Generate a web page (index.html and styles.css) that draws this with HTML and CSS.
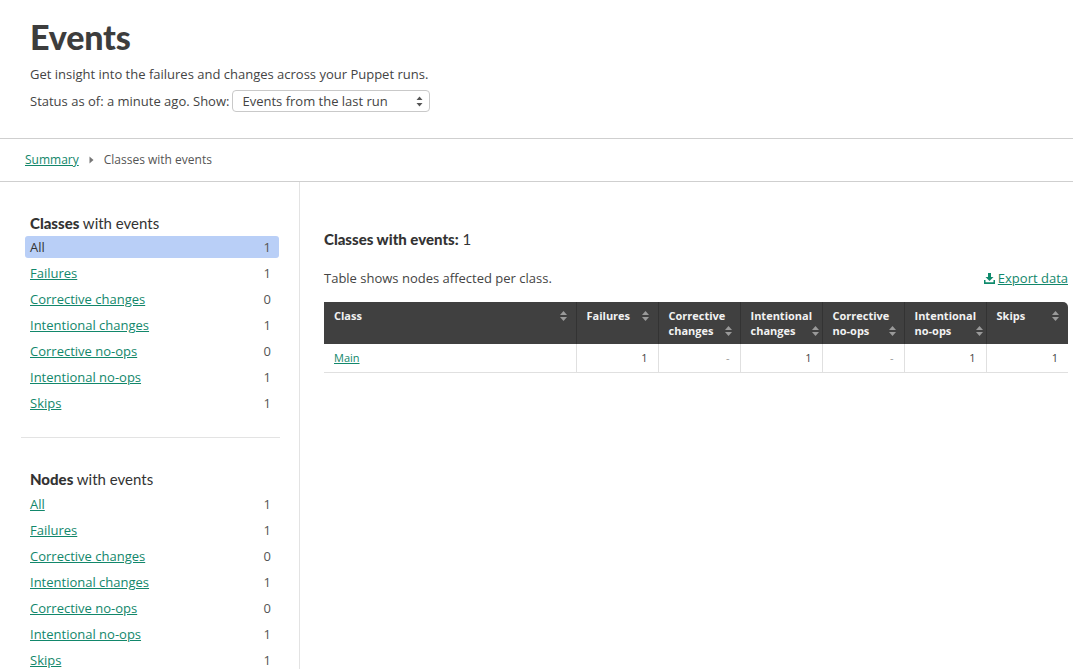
FILE: index.html
```html
<!DOCTYPE html>
<html>
<head>
<meta charset="utf-8">
<link rel="stylesheet" href="styles.css">
</head>
<body>
<header class="page-head">
  <h1 class="title">Events</h1>
  <p class="desc">Get insight into the failures and changes across your Puppet runs.</p>
  <div class="status">
    <span>Status as of: a minute ago. Show:</span>
    <div class="select">
      <span>Events from the last run</span>
      <svg class="sel-arrows" width="7" height="11" viewBox="0 0 7 11"><path d="M3.5 0.5L6.5 4H0.5Z M3.5 10.5L6.5 7H0.5Z" fill="#555"/></svg>
    </div>
  </div>
</header>
<nav class="crumbs">
  <a href="#">Summary</a>
  <svg class="crumb-arrow" width="5" height="8" viewBox="0 0 5 8"><path d="M0.5 0.5L4.5 4L0.5 7.5Z" fill="#777"/></svg>
  <span>Classes with events</span>
</nav>
<div class="layout">
  <aside class="sidebar">
    <section class="group">
      <h3 class="group-title"><b>Classes</b> with events</h3>
      <ul class="list">
        <li class="row active"><span>All</span><span>1</span></li>
        <li class="row"><a href="#">Failures</a><span>1</span></li>
        <li class="row"><a href="#">Corrective changes</a><span>0</span></li>
        <li class="row"><a href="#">Intentional changes</a><span>1</span></li>
        <li class="row"><a href="#">Corrective no-ops</a><span>0</span></li>
        <li class="row"><a href="#">Intentional no-ops</a><span>1</span></li>
        <li class="row"><a href="#">Skips</a><span>1</span></li>
      </ul>
    </section>
    <hr class="side-rule">
    <section class="group group-2">
      <h3 class="group-title"><b>Nodes</b> with events</h3>
      <ul class="list">
        <li class="row"><a href="#">All</a><span>1</span></li>
        <li class="row"><a href="#">Failures</a><span>1</span></li>
        <li class="row"><a href="#">Corrective changes</a><span>0</span></li>
        <li class="row"><a href="#">Intentional changes</a><span>1</span></li>
        <li class="row"><a href="#">Corrective no-ops</a><span>0</span></li>
        <li class="row"><a href="#">Intentional no-ops</a><span>1</span></li>
        <li class="row"><a href="#">Skips</a><span>1</span></li>
      </ul>
    </section>
  </aside>
  <main class="main">
    <h2 class="main-title"><b>Classes with events:</b> 1</h2>
    <div class="table-bar">
      <span>Table shows nodes affected per class.</span>
      <a href="#" class="export">
        <svg width="11" height="11" viewBox="0 0 11 11"><path d="M4 0H7V4H9.5L5.5 8L1.5 4H4Z" fill="#0f8a6c"/><path d="M0 7H1.5V9.3H9.5V7H11V11H0Z" fill="#0f8a6c"/></svg>
        <span>Export data</span>
      </a>
    </div>
    <table class="tbl">
      <thead>
        <tr>
          <th class="c-class"><div class="th"><span>Class</span><svg class="sort" width="7" height="10" viewBox="0 0 7 10"><path d="M3.5 0L7 4H0Z M3.5 10L7 6H0Z" fill="#9a9a9a"/></svg></div></th>
          <th><div class="th"><span>Failures</span><svg class="sort" width="7" height="10" viewBox="0 0 7 10"><path d="M3.5 0L7 4H0Z M3.5 10L7 6H0Z" fill="#9a9a9a"/></svg></div></th>
          <th><div class="th th2"><span>Corrective<br>changes</span><svg class="sort" width="7" height="10" viewBox="0 0 7 10"><path d="M3.5 0L7 4H0Z M3.5 10L7 6H0Z" fill="#9a9a9a"/></svg></div></th>
          <th><div class="th th2"><span>Intentional<br>changes</span><svg class="sort" width="7" height="10" viewBox="0 0 7 10"><path d="M3.5 0L7 4H0Z M3.5 10L7 6H0Z" fill="#9a9a9a"/></svg></div></th>
          <th><div class="th th2"><span>Corrective<br>no-ops</span><svg class="sort" width="7" height="10" viewBox="0 0 7 10"><path d="M3.5 0L7 4H0Z M3.5 10L7 6H0Z" fill="#9a9a9a"/></svg></div></th>
          <th><div class="th th2"><span>Intentional<br>no-ops</span><svg class="sort" width="7" height="10" viewBox="0 0 7 10"><path d="M3.5 0L7 4H0Z M3.5 10L7 6H0Z" fill="#9a9a9a"/></svg></div></th>
          <th class="last"><div class="th"><span>Skips</span><svg class="sort" width="7" height="10" viewBox="0 0 7 10"><path d="M3.5 0L7 4H0Z M3.5 10L7 6H0Z" fill="#9a9a9a"/></svg></div></th>
        </tr>
      </thead>
      <tbody>
        <tr>
          <td class="c-class"><a href="#">Main</a></td>
          <td class="num">1</td>
          <td class="num dash">-</td>
          <td class="num">1</td>
          <td class="num dash">-</td>
          <td class="num">1</td>
          <td class="num">1</td>
        </tr>
      </tbody>
    </table>
  </main>
</div>
</body>
</html>
```
FILE: styles.css
```css
* { box-sizing: border-box; }
html, body { margin: 0; padding: 0; background: #fff; }
body {
  font-family: "Open Sans", "Liberation Sans", sans-serif;
  font-size: 13px;
  color: #444;
  width: 1073px;
  overflow: hidden;
}
a { color: #12876b; text-decoration: underline; }

.page-head {
  padding: 17px 30px 26px;
  border-bottom: 1px solid #cfcfcf;
}
.title {
  margin: 0;
  font-family: Lato, "Liberation Sans", sans-serif;
  font-weight: 900;
  font-size: 34px;
  line-height: 40px;
  color: #3d3d3d;
  letter-spacing: -0.2px;
}
.desc {
  margin: 8px 0 0;
  line-height: 18px;
}
.status {
  margin-top: 7px;
  display: flex;
  align-items: center;
  gap: 3px;
  height: 22px;
}
.select {
  width: 198px;
  height: 22px;
  border: 1px solid #c9c9c9;
  border-radius: 4px;
  display: flex;
  align-items: center;
  justify-content: space-between;
  padding: 0 6px 0 9px;
  color: #444;
}

.crumbs {
  height: 43px;
  padding: 0 25px 1px;
  display: flex;
  align-items: center;
  gap: 9px;
  font-size: 12px;
  border-bottom: 1px solid #cfcfcf;
  color: #555;
}
.crumb-arrow { margin: 0 1px; }

.layout {
  display: flex;
  min-height: 500px;
}
.sidebar {
  width: 300px;
  flex: none;
  border-right: 1px solid #e3e3e3;
  padding: 32px 19px 0 21px;
}
.group { padding-left: 4px; }
.group-title {
  margin: 0 0 4px 5px;
  font-family: Lato, "Liberation Sans", sans-serif;
  font-weight: 400;
  font-size: 15px;
  line-height: 18px;
  color: #333;
}
.group-2 .group-title { margin-bottom: 5px; }
.group-title b { font-weight: 900; }
.list { list-style: none; margin: 0; padding: 0; }
.row {
  height: 22px;
  margin-bottom: 4px;
  padding: 0 8px 0 5px;
  margin-right: 1px;
  display: flex;
  align-items: center;
  justify-content: space-between;
  border-radius: 3px;
}
.row.active { background: #b9cff7; color: #333; }
.row span:last-child { color: #555; }
.side-rule {
  border: 0;
  border-top: 1px solid #e3e3e3;
  margin: 23px 0 0;
}
.group-2 { margin-top: 32px; }

.main {
  flex: 1;
  padding: 47px 5px 0 24px;
  min-width: 0;
}
.main-title {
  margin: 0;
  font-family: Lato, "Liberation Sans", sans-serif;
  font-size: 15px;
  line-height: 20px;
  font-weight: 400;
  color: #333;
}
.main-title b { font-weight: 900; }
.table-bar {
  margin-top: 20px;
  display: flex;
  justify-content: space-between;
  align-items: center;
  height: 18px;
}
.export { display: flex; align-items: center; gap: 3px; }

.tbl {
  margin-top: 15px;
  width: 744px;
  border-collapse: collapse;
  table-layout: fixed;
}
.tbl th {
  background: #404040;
  color: #f2f2f2;
  font-size: 11px;
  font-weight: 700;
  text-align: left;
  vertical-align: top;
  height: 42px;
  padding: 6px 9px 0 10px;
  width: 82px;
  border-left: 1px solid #333;
}
.tbl th.c-class { width: 252px; border-left: 0; }
.tbl th.last { border-top-right-radius: 5px; }
.th {
  display: flex;
  justify-content: space-between;
  align-items: flex-start;
  line-height: 15px;
}
.th .sort { margin-top: 3px; flex: none; }
.th2 .sort { margin-top: 18px; }
.tbl td {
  height: 28px;
  font-size: 11px;
  padding: 0 10px;
  border-left: 1px solid #e0e0e0;
  border-bottom: 1px solid #e0e0e0;
  color: #444;
}
.tbl td.c-class { border-left: 0; }
.tbl td.num { text-align: right; }
.tbl td.dash { color: #999; }
```
